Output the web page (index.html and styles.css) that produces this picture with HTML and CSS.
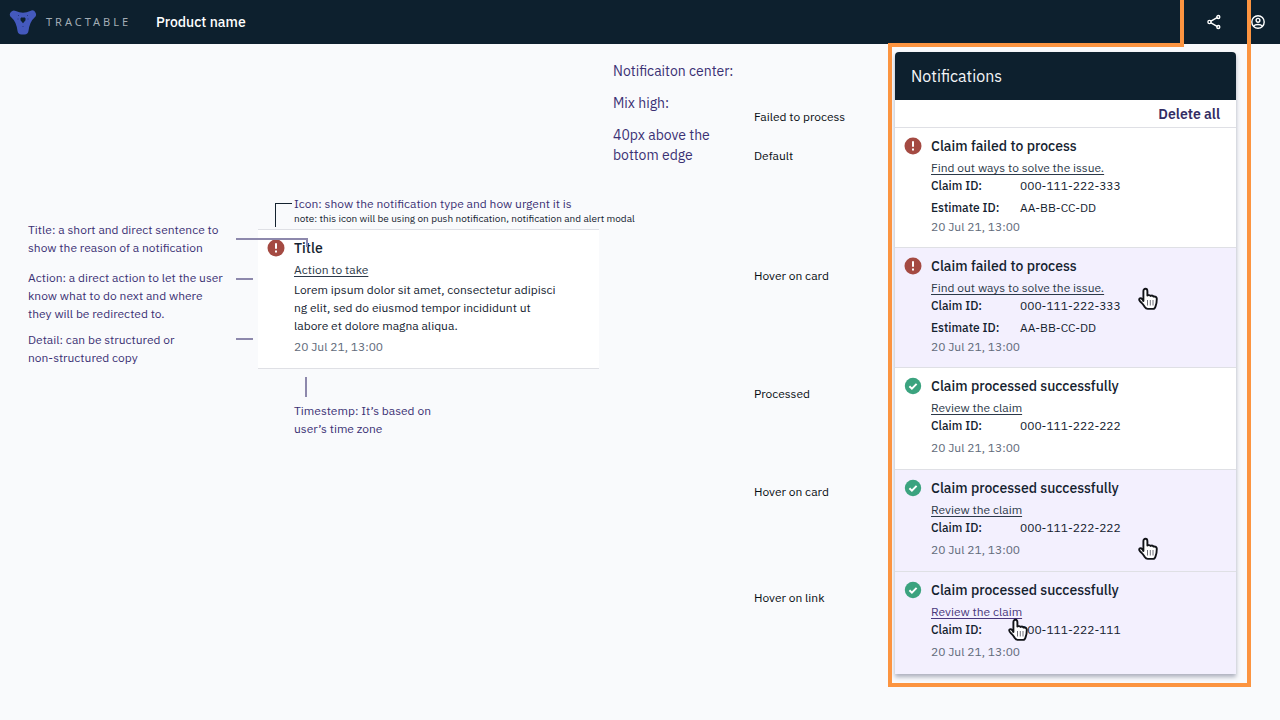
FILE: index.html
```html
<!DOCTYPE html>
<html lang="en">
<head>
<meta charset="utf-8">
<title>Notifications – Tractable</title>
<link rel="stylesheet" href="styles.css">
</head>
<body>
<svg class="defs" aria-hidden="true">
  <symbol id="error" viewBox="0 0 18 18"><circle cx="9" cy="9" r="8.5" fill="#a44a42"/><path d="M8 4.2h2v5.6H8zM8 11.5h2v2H8z" fill="#fff"/></symbol>
  <symbol id="success" viewBox="0 0 18 18"><circle cx="9" cy="9" r="8.2" fill="#3ba37f"/><path d="M5.4 9.2l2.5 2.4 4.7-4.7" fill="none" stroke="#fff" stroke-width="2"/></symbol>
  <symbol id="hand" viewBox="0 0 22 24"><path d="M6.400 14V4.200c0-3.200 4-3.200 4 0v4.300c1-.7 2.600-.5 3.200.4 1-.5 2.400-.2 3 .7 1.700-.4 3.200.4 3.200 2.200 0 3.800-.3 5.500-1.300 7.700-.5 1.900-1.100 2.400-2.300 2.400h-5.400c-1.700 0-2.300-.7-3-1.900-.9-1.800-2-2.900-3.400-4.300-1.600-1.600-2.900-2.800-2-4 1.100-1.200 2.700-.4 4 2.300z" fill="#fff" stroke="#111318" stroke-width="1.900" stroke-linejoin="round"/><path d="M10.500 13v5.500M13.300 13v5.500M16 13v5.500" stroke="#70717a" stroke-width="1" fill="none"/></symbol>
</svg>
<header class="topbar">
  <svg class="logo" viewBox="0 0 28 26" aria-hidden="true"><path d="M5 5.500q9 4.500 18 0-6 5-7.500 16h-3Q11 10.500 5 5.500z" fill="#4459bd" stroke="#4459bd" stroke-width="8" stroke-linejoin="round"/><path d="M11.500 9.200l1.300-1 1.200.6 1.200-.6 1.300 1v2l-2.500 3-2.500-3z" fill="#0d202e"/><path d="M9 6.500h1M18 6.500h1M8.500 10h1M18.500 10h1M13.500 17.500h1" stroke="#263982" stroke-width="1"/></svg>
  <span class="wordmark">TRACTABLE</span>
  <span class="product">Product name</span>
  <button class="icon-button" aria-label="Share"><svg viewBox="0 0 16 16"><g fill="none" stroke="#fff" stroke-width="1.400"><path d="M4.500 7.300l7-4M4.500 8.700l7 4"/><circle cx="3.500" cy="8" r="1.600"/><circle cx="12.300" cy="3" r="1.500"/><circle cx="12.300" cy="13" r="1.500"/></g></svg></button>
  <button class="icon-button" aria-label="Account"><svg viewBox="0 0 16 16"><g fill="none" stroke="#fff" stroke-width="1.400"><circle cx="8" cy="8" r="6.200"/><circle cx="8" cy="6.300" r="1.900"/><path d="M3.700 12.200c1.500-2.300 7.100-2.300 8.600 0"/></g></svg></button>
</header>
<main class="board">
  <section class="notes">
    <p class="note note-title">Title: a short and direct sentence to<br>show the reason of a notification</p>
    <p class="note note-dash">Action: a direct action to let the user<br>know what to do next and where<br>they will be redirected to.</p>
    <p class="note note-dash note-detail">Detail: can be structured or<br>non-structured copy</p>
  </section>
  <section class="anatomy">
    <p class="icon-note">Icon: show the notification type and how urgent it is</p>
    <p class="icon-subnote">note: this icon will be using on push notification, notification and alert modal</p>
    <article class="card sample">
      <svg class="status"><use href="#error"/></svg>
      <div class="content">
        <h3>Title</h3>
        <a href="#">Action to take</a>
        <p class="detail">Lorem ipsum dolor sit amet, consectetur adipisci<br>ng elit, sed do eiusmod tempor incididunt ut<br>labore et dolore magna aliqua.</p>
        <time class="tight">20 Jul 21, 13:00</time>
      </div>
    </article>
    <p class="note time-note">Timestemp: It’s based on<br>user’s time zone</p>
  </section>
  <section class="specs">
    <p>Notificaiton center:</p>
    <p>Mix high:</p>
    <p>40px above the<br>bottom edge</p>
  </section>
  <section class="states">
    <p class="first">Failed to process</p>
    <p class="second">Default</p>
    <p class="failed-hover">Hover on card</p>
    <p class="processed">Processed</p>
    <p class="processed-hover">Hover on card</p>
    <p class="link-hover">Hover on link</p>
  </section>
  <section class="center">
    <div class="frame"></div>
    <div class="panel">
      <h2>Notifications</h2>
      <div class="actions"><button>Delete all</button></div>
      <article class="card">
        <svg class="status"><use href="#error"/></svg>
        <div class="content">
          <h3>Claim failed to process</h3>
          <a href="#">Find out ways to solve the issue.</a>
          <dl><dt>Claim ID:</dt><dd>000-111-222-333</dd><dt>Estimate ID:</dt><dd>AA-BB-CC-DD</dd></dl>
          <time class="close">20 Jul 21, 13:00</time>
        </div>
      </article>
      <article class="card hover">
        <svg class="status"><use href="#error"/></svg>
        <div class="content">
          <h3>Claim failed to process</h3>
          <a href="#">Find out ways to solve the issue.</a>
          <dl><dt>Claim ID:</dt><dd>000-111-222-333</dd><dt>Estimate ID:</dt><dd>AA-BB-CC-DD</dd></dl>
          <time class="close">20 Jul 21, 13:00</time>
        </div>
        <svg class="cursor on-first"><use href="#hand"/></svg>
      </article>
      <article class="card done">
        <svg class="status"><use href="#success"/></svg>
        <div class="content">
          <h3>Claim processed successfully</h3>
          <a href="#">Review the claim</a>
          <dl><dt>Claim ID:</dt><dd>000-111-222-222</dd></dl>
          <time>20 Jul 21, 13:00</time>
        </div>
      </article>
      <article class="card done hover">
        <svg class="status"><use href="#success"/></svg>
        <div class="content">
          <h3>Claim processed successfully</h3>
          <a href="#">Review the claim</a>
          <dl><dt>Claim ID:</dt><dd>000-111-222-222</dd></dl>
          <time>20 Jul 21, 13:00</time>
        </div>
        <svg class="cursor on-second"><use href="#hand"/></svg>
      </article>
      <article class="card done hover">
        <svg class="status"><use href="#success"/></svg>
        <div class="content">
          <h3>Claim processed successfully</h3>
          <a href="#" class="active">Review the claim</a>
          <dl><dt>Claim ID:</dt><dd>000-111-222-111</dd></dl>
          <time>20 Jul 21, 13:00</time>
        </div>
        <svg class="cursor on-link"><use href="#hand"/></svg>
      </article>
    </div>
  </section>
</main>
</body>
</html>
```
FILE: styles.css
```css
:root {
  --navy: #0d202e;
  --ink: #14222f;
  --purple: #3b3174;
  --connector: #8d88ac;
  --orange: #fc9440;
  --line: #dfe0e5;
}
*, *::before, *::after { box-sizing: border-box; }
body, p, h2, h3, dl, dd { margin: 0; }
body {
  background: #f9fafc;
  color: var(--ink);
  font: 12px/18px "IBM Plex Sans", Inter, "Noto Sans", sans-serif;
}
button {
  padding: 0;
  border: 0;
  background: none;
  font: inherit;
  color: inherit;
  cursor: pointer;
}
.defs { position: absolute; width: 0; height: 0; }

.topbar {
  display: flex;
  align-items: center;
  height: 44px;
  padding: 0 14px 0 9px;
  background: var(--navy);
  color: #fff;
}
.logo { width: 28px; height: 26px; margin-right: 9px; }
.wordmark {
  width: 110px;
  font-family: "Noto Sans", sans-serif;
  font-size: 11px;
  letter-spacing: 3px;
  color: #a3adb5;
}
.product { flex: 1; font-size: 14px; font-weight: 500; }
.icon-button { display: flex; margin-left: 28px; }
.icon-button svg { width: 16px; height: 16px; }

.board {
  display: grid;
  grid-template-columns: minmax(0, 230fr) minmax(0, 355fr) minmax(0, 141fr) minmax(0, 141fr) 341px;
  padding: 8px 44px 33px 28px;
}
.note { position: relative; color: var(--purple); }
.notes { padding-top: 169px; white-space: nowrap; }
.note-title { margin-bottom: 12px; }
.note-detail { margin-top: 8px; }
.note-dash::after, .note-title::after {
  content: "";
  position: absolute;
  top: 9px;
  right: 5px;
  width: 17px;
  border-top: 2px solid var(--connector);
}
.note-detail::after { top: 7px; }
.note-title::after {
  z-index: 1;
  top: 17px;
  right: -50px;
  width: 72px;
  height: 9px;
  border-right: 2px solid var(--connector);
}

.anatomy { padding-top: 144px; white-space: nowrap; }
.icon-note {
  position: relative;
  margin-left: 36px;
  font-size: 12px;
  line-height: 16px;
  color: var(--purple);
}
.icon-note::before {
  content: "";
  position: absolute;
  top: 7px;
  left: -19px;
  width: 17px;
  height: 24px;
  border: solid var(--ink);
  border-width: 1px 0 0 1px;
}
.icon-subnote { margin: 0 0 4px 36px; padding-top: 1px; font-size: 10px; line-height: 12px; }
.detail { margin-top: 2px; }
.time-note { margin: 33px 0 0 36px; }
.time-note::before {
  content: "";
  position: absolute;
  top: -25px;
  left: 11px;
  height: 20px;
  border-left: 2px solid var(--connector);
}

.specs {
  display: flex;
  flex-direction: column;
  gap: 12px;
  padding-top: 9px;
  font-size: 14px;
  line-height: 20px;
  color: var(--purple);
}
.states { padding-top: 56px; color: #080d13; }
.second { margin-top: 21px; }
.failed-hover { margin-top: 102px; }
.processed { margin-top: 100px; }
.processed-hover { margin-top: 80px; }
.link-hover { margin-top: 88px; }

.center { position: relative; }
.panel {
  border-radius: 4px 4px 0 0;
  background: #fff;
  box-shadow: 0 3px 4px #5f668080;
}
.panel h2 {
  padding: 14px 16px;
  border-radius: 4px 4px 0 0;
  background: var(--navy);
  color: #f4f6f8;
  font-size: 16px;
  font-weight: 400;
  line-height: 20px;
}
.actions { display: flex; justify-content: flex-end; padding: 5px 16px 4px; }
.actions button { font-size: 14px; font-weight: 600; color: #332c63; }
.card {
  position: relative;
  display: flex;
  gap: 9px;
  padding: 8px 9px 11px;
  border-top: 1px solid var(--line);
  background: #fff;
}
.done { padding-bottom: 12px; }
.done:last-child { padding-bottom: 13px; }
.sample { max-width: 341px; padding-bottom: 12px; border-bottom: 1px solid var(--line); }
.hover { background: #f3f0fe; }
.status { width: 18px; height: 18px; margin-top: 1px; flex: none; }
.content { flex: 1; }
.card h3 {
  margin-bottom: 3px;
  font-size: 14px;
  font-weight: 500;
  line-height: 20px;
}
.card a {
  display: block;
  width: fit-content;
  color: #2c3949;
  text-decoration: underline;
  text-underline-offset: 2px;
}
.card .active { color: #49387c; }
dl { display: grid; grid-template-columns: 89px 1fr; row-gap: 4px; }
dt { font-weight: 500; }
time { display: block; margin-top: 4px; color: #626b7b; }
time.close { margin-top: 1px; }
time.tight { margin-top: 3px; }
.cursor { position: absolute; width: 22px; height: 24px; }
.on-first { top: 39px; left: 242px; }
.on-second { top: 67px; left: 242px; }
.on-link { top: 46px; left: 112px; }

.frame {
  position: absolute;
  z-index: 1;
  inset: -9px -15px -13px -7px;
  border: solid var(--orange);
  border-width: 0 4px 4px;
  pointer-events: none;
}
.frame::before, .frame::after {
  content: "";
  position: absolute;
  top: -43px;
}
.frame::before {
  left: -4px;
  right: 63px;
  height: 47px;
  border: solid var(--orange);
  border-width: 0 4px 4px 0;
}
.frame::after { right: -4px; height: 43px; border-left: 4px solid var(--orange); }
```
